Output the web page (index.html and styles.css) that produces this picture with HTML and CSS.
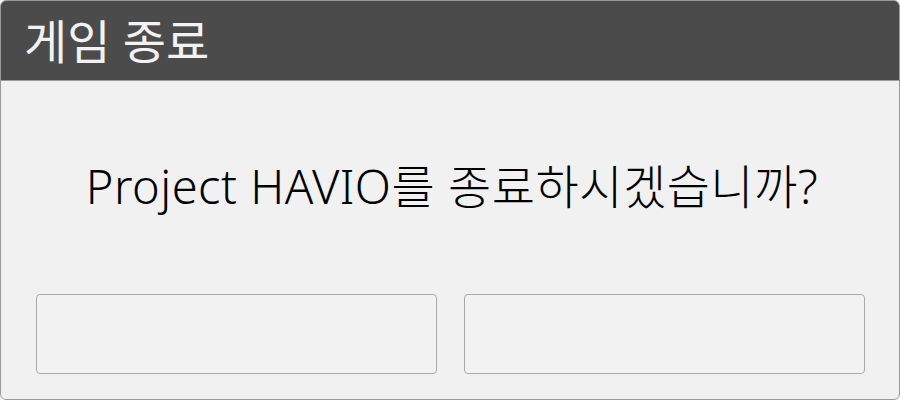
FILE: index.html
```html
<!DOCTYPE html>
<html lang="ko">
<head>
<meta charset="utf-8">
<link rel="stylesheet" href="styles.css">
</head>
<body>
<div class="dialog">
  <div class="header"><span class="title">게임 종료</span></div>
  <div class="message">Project HAVIO를 종료하시겠습니까?</div>
  <div class="buttons">
    <div class="btn"></div>
    <div class="btn"></div>
  </div>
</div>
</body>
</html>
```
FILE: styles.css
```css
html, body {
  margin: 0;
  padding: 0;
  background: #ffffff;
}
.dialog {
  width: 900px;
  height: 400px;
  box-sizing: border-box;
  border: 1px solid #999999;
  border-radius: 6px;
  overflow: hidden;
  background: #f1f1f1;
  display: flex;
  flex-direction: column;
  font-family: "Noto Sans", "Noto Sans CJK KR", sans-serif;
}
.header {
  height: 79px;
  background: #4b4b4b;
  border-bottom: 1px solid #9a9a9a;
  display: flex;
  align-items: center;
  padding-left: 23px;
}
.title {
  color: #f2f2f2;
  font-size: 47px;
  line-height: 1;
  padding-top: 2px;
}
.message {
  flex: 1;
  display: flex;
  align-items: center;
  justify-content: center;
  font-size: 47px;
  font-weight: 300;
  color: #000000;
  padding-left: 4px;
  padding-bottom: 8px;
  letter-spacing: 0.5px;
}
.buttons {
  display: flex;
  gap: 27px;
  padding: 0 34px 25px 35px;
}
.btn {
  width: 401px;
  height: 80px;
  box-sizing: border-box;
  border: 1px solid #aaaaaa;
  border-radius: 4px;
  background: #f2f2f2;
}
```
